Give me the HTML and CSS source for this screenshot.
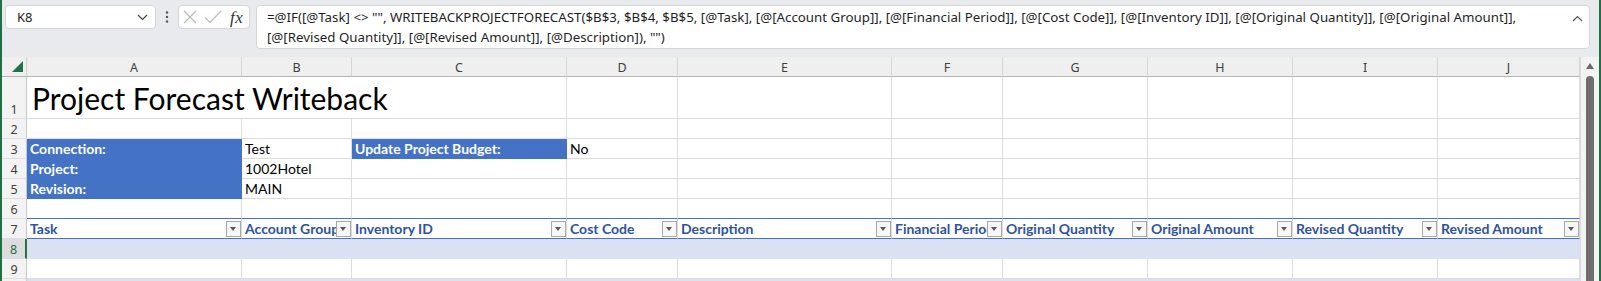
FILE: index.html
```html
<!DOCTYPE html>
<html lang="en">
<head>
<meta charset="utf-8">
<title>Project Forecast Writeback</title>
<link rel="stylesheet" href="styles.css">
</head>
<body>
<div class="app">
  <div class="fbar">
    <div class="namebox">
      <span class="nb-text">K8</span>
      <svg class="chev" width="11" height="7" viewBox="0 0 11 7"><path d="M1 1 L5.5 5.5 L10 1" fill="none" stroke="#444" stroke-width="1.2"/></svg>
    </div>
    <div class="dots">
      <svg width="4" height="12" viewBox="0 0 4 12"><circle cx="2" cy="1.5" r="1.2" fill="#555"/><circle cx="2" cy="6" r="1.2" fill="#555"/><circle cx="2" cy="10.5" r="1.2" fill="#555"/></svg>
    </div>
    <div class="fxbox">
      <svg class="xicon" width="14" height="14" viewBox="0 0 14 14"><path d="M1 1 L13 13 M13 1 L1 13" stroke="#b8b8b8" stroke-width="1.1" fill="none"/></svg>
      <svg class="ckicon" width="18" height="14" viewBox="0 0 18 14"><path d="M1 7.5 L6 12.5 L17 1" stroke="#b8b8b8" stroke-width="1.1" fill="none"/></svg>
      <span class="fx">fx</span>
    </div>
    <div class="formula">
      <div class="ftext">=@IF([@Task] &lt;&gt; "", WRITEBACKPROJECTFORECAST($B$3, $B$4, $B$5, [@Task], [@[Account Group]], [@[Financial Period]], [@[Cost Code]], [@[Inventory ID]], [@[Original Quantity]], [@[Original Amount]],<br>[@[Revised Quantity]], [@[Revised Amount]], [@Description]), "")</div>
      <svg class="caret" width="11" height="7" viewBox="0 0 11 7"><path d="M1 6 L5.5 1.5 L10 6" fill="none" stroke="#555" stroke-width="1.2"/></svg>
    </div>
  </div>

  <div class="sheet">
    <div class="grid">
      <div class="row hdr">
        <div class="corner"><span class="tri"></span></div>
        <div class="ch">A</div><div class="ch">B</div><div class="ch">C</div><div class="ch">D</div><div class="ch">E</div>
        <div class="ch">F</div><div class="ch">G</div><div class="ch">H</div><div class="ch">I</div><div class="ch">J</div>
      </div>

      <div class="row r1">
        <div class="rh">1</div>
        <div class="c title">Project Forecast Writeback</div>
        <div class="c"></div><div class="c"></div><div class="c"></div><div class="c"></div><div class="c"></div><div class="c"></div><div class="c"></div>
      </div>

      <div class="row">
        <div class="rh">2</div>
        <div class="c"></div><div class="c"></div><div class="c"></div><div class="c"></div><div class="c"></div><div class="c"></div><div class="c"></div><div class="c"></div><div class="c"></div><div class="c"></div>
      </div>

      <div class="row">
        <div class="rh">3</div>
        <div class="c lbl">Connection:</div>
        <div class="c">Test</div>
        <div class="c lbl">Update Project Budget:</div>
        <div class="c">No</div>
        <div class="c"></div><div class="c"></div><div class="c"></div><div class="c"></div><div class="c"></div><div class="c"></div>
      </div>

      <div class="row">
        <div class="rh">4</div>
        <div class="c lbl">Project:</div>
        <div class="c">1002Hotel</div>
        <div class="c"></div><div class="c"></div><div class="c"></div><div class="c"></div><div class="c"></div><div class="c"></div><div class="c"></div><div class="c"></div>
      </div>

      <div class="row">
        <div class="rh">5</div>
        <div class="c lbl">Revision:</div>
        <div class="c">MAIN</div>
        <div class="c"></div><div class="c"></div><div class="c"></div><div class="c"></div><div class="c"></div><div class="c"></div><div class="c"></div><div class="c"></div>
      </div>

      <div class="row r6">
        <div class="rh">6</div>
        <div class="c"></div><div class="c"></div><div class="c"></div><div class="c"></div><div class="c"></div><div class="c"></div><div class="c"></div><div class="c"></div><div class="c"></div><div class="c"></div>
      </div>

      <div class="row r7">
        <div class="rh">7</div>
        <div class="c th">Task<span class="flt"></span></div>
        <div class="c th">Account Group<span class="flt"></span></div>
        <div class="c th">Inventory ID<span class="flt"></span></div>
        <div class="c th">Cost Code<span class="flt"></span></div>
        <div class="c th">Description<span class="flt"></span></div>
        <div class="c th">Financial Period<span class="flt"></span></div>
        <div class="c th">Original Quantity<span class="flt"></span></div>
        <div class="c th">Original Amount<span class="flt"></span></div>
        <div class="c th">Revised Quantity<span class="flt"></span></div>
        <div class="c th">Revised Amount<span class="flt"></span></div>
      </div>

      <div class="row band">
        <div class="rh sel">8</div>
        <div class="c"></div><div class="c"></div><div class="c"></div><div class="c"></div><div class="c"></div><div class="c"></div><div class="c"></div><div class="c"></div><div class="c"></div><div class="c"></div>
      </div>

      <div class="row">
        <div class="rh">9</div>
        <div class="c"></div><div class="c"></div><div class="c"></div><div class="c"></div><div class="c"></div><div class="c"></div><div class="c"></div><div class="c"></div><div class="c"></div><div class="c"></div>
      </div>

      <div class="row band">
        <div class="rh"></div>
        <div class="c"></div><div class="c"></div><div class="c"></div><div class="c"></div><div class="c"></div><div class="c"></div><div class="c"></div><div class="c"></div><div class="c"></div><div class="c"></div>
      </div>
    </div>

    <div class="vscroll">
      <div class="vs-top"><span class="up"></span></div>
      <div class="thumb"></div>
    </div>
  </div>
</div>
</body>
</html>
```

FILE: styles.css
```css
* {
  box-sizing: border-box;
  margin: 0;
  padding: 0;
}

html, body {
  width: 1601px;
  height: 281px;
  overflow: hidden;
}

body {
  background: #ffffff;
  font-family: Lato, "Liberation Sans", sans-serif;
}

.app {
  height: 281px;
  border-left: 2px solid #1e7145;
  border-right: 2px solid #1e7145;
  background: #e9eaed;
  display: flex;
  flex-direction: column;
  overflow: hidden;
}

/* ---------- formula bar ---------- */
.fbar {
  height: 57px;
  flex: 0 0 57px;
  display: flex;
  align-items: flex-start;
  padding: 5px 0 0 3px;
}

.namebox {
  width: 151px;
  height: 24px;
  background: #ffffff;
  border: 1px solid #d4d6da;
  border-radius: 4px;
  display: flex;
  align-items: center;
  justify-content: space-between;
  padding: 0 7px 0 11px;
}

.nb-text {
  font-family: "Noto Sans", sans-serif;
  font-size: 13px;
  color: #222;
}

.dots {
  width: 22px;
  height: 24px;
  display: flex;
  align-items: center;
  justify-content: center;
}

.fxbox {
  width: 72px;
  height: 24px;
  background: #ffffff;
  border: 1px solid #d4d6da;
  border-radius: 4px;
  display: flex;
  align-items: center;
  padding: 0 0 0 4px;
}

.xicon {
  margin-right: 7px;
}

.ckicon {
  margin-right: 8px;
}

.fx {
  font-family: "Liberation Serif", serif;
  font-style: italic;
  font-size: 17px;
  color: #333;
  line-height: 1;
  letter-spacing: 0.5px;
}

.formula {
  margin-left: 6px;
  width: 1334px;
  height: 44px;
  background: #ffffff;
  border: 1px solid #d4d6da;
  border-radius: 4px;
  display: flex;
  justify-content: space-between;
  padding: 1px 6px 0 10px;
}

.ftext {
  font-family: "Noto Sans", sans-serif;
  font-size: 13.3px;
  line-height: 20px;
  color: #1f1f1f;
  white-space: nowrap;
}

.caret {
  margin-top: 8px;
}

/* ---------- sheet ---------- */
.sheet {
  flex: 1;
  display: flex;
}

.grid {
  width: 1578px;
  display: flex;
  flex-direction: column;
}

.row {
  display: grid;
  grid-template-columns: 25px 215px 110px 215px 111px 214px 111px 145px 145px 145px 142px;
  height: 20px;
  flex: 0 0 20px;
}

.row.r1 {
  height: 42px;
  flex-basis: 42px;
}

.hdr {
  background: #efefef;
}

.corner {
  border-right: 1px solid #d0d0d0;
  border-bottom: 1px solid #b5b5b5;
  position: relative;
}

.tri {
  position: absolute;
  right: 3px;
  bottom: 4px;
  width: 0;
  height: 0;
  border-left: 11px solid transparent;
  border-bottom: 11px solid #217346;
}

.ch {
  border-right: 1px solid #d6d6d6;
  border-bottom: 1px solid #b5b5b5;
  display: flex;
  align-items: center;
  justify-content: center;
  font-family: "Noto Sans", sans-serif;
  font-size: 12.5px;
  color: #404040;
  padding-top: 1px;
}

.rh {
  background: #f3f3f3;
  border-right: 1px solid #c8c8c8;
  border-bottom: 1px solid #dedede;
  display: flex;
  align-items: flex-end;
  justify-content: center;
  padding-bottom: 0;
  font-family: "Noto Sans", sans-serif;
  font-size: 12.5px;
  line-height: 17px;
  color: #404040;
}

.rh.sel {
  background: #dcdcdc;
  color: #217346;
  border-right: 2px solid #217346;
  border-bottom-color: #dcdcdc;
}

.c {
  background: #ffffff;
  border-right: 1px solid #dcdcdc;
  border-bottom: 1px solid #dcdcdc;
  display: flex;
  align-items: flex-end;
  padding: 0 3px 1px 3px;
  font-size: 14px;
  line-height: 17px;
  color: #000;
  white-space: nowrap;
  overflow: hidden;
  position: relative;
}

.title {
  grid-column: span 3;
  font-size: 30px;
  line-height: 36px;
  padding: 0 3px 2px 5px;
}

.lbl {
  background: #4472c4;
  border-right-color: #4472c4;
  border-bottom-color: #4472c4;
  color: #ffffff;
  font-weight: 700;
}

.r6 .c {
  border-bottom-color: #4472c4;
}

.r7 .c {
  border-bottom-color: #4472c4;
}

.th {
  font-weight: 700;
  color: #2f539e;
}

.flt {
  position: absolute;
  right: 0;
  top: 2px;
  width: 15px;
  height: 16px;
  background: #f7f7f7;
  border: 1px solid #a9a9a9;
}

.flt::after {
  content: "";
  position: absolute;
  left: 3px;
  top: 5px;
  border-left: 3.5px solid transparent;
  border-right: 3.5px solid transparent;
  border-top: 4px solid #5a5a5a;
}

.band .c {
  background: #d9e1f2;
  border-right-color: #d9e1f2;
  border-bottom-color: #d9e1f2;
}

/* ---------- vertical scrollbar ---------- */
.vscroll {
  width: 19px;
  background: #f3f3f3;
  border-left: 1px solid #dcdcdc;
  display: flex;
  flex-direction: column;
  align-items: center;
  padding-top: 6px;
}

.vs-top {
  height: 12px;
  display: flex;
  justify-content: center;
}

.up {
  width: 0;
  height: 0;
  border-left: 4.5px solid transparent;
  border-right: 4.5px solid transparent;
  border-bottom: 6px solid #6a6a6a;
}

.thumb {
  width: 8px;
  flex: 1;
  margin-top: 1px;
  background: #6e6e6e;
  border-radius: 4px 4px 0 0;
}
```
